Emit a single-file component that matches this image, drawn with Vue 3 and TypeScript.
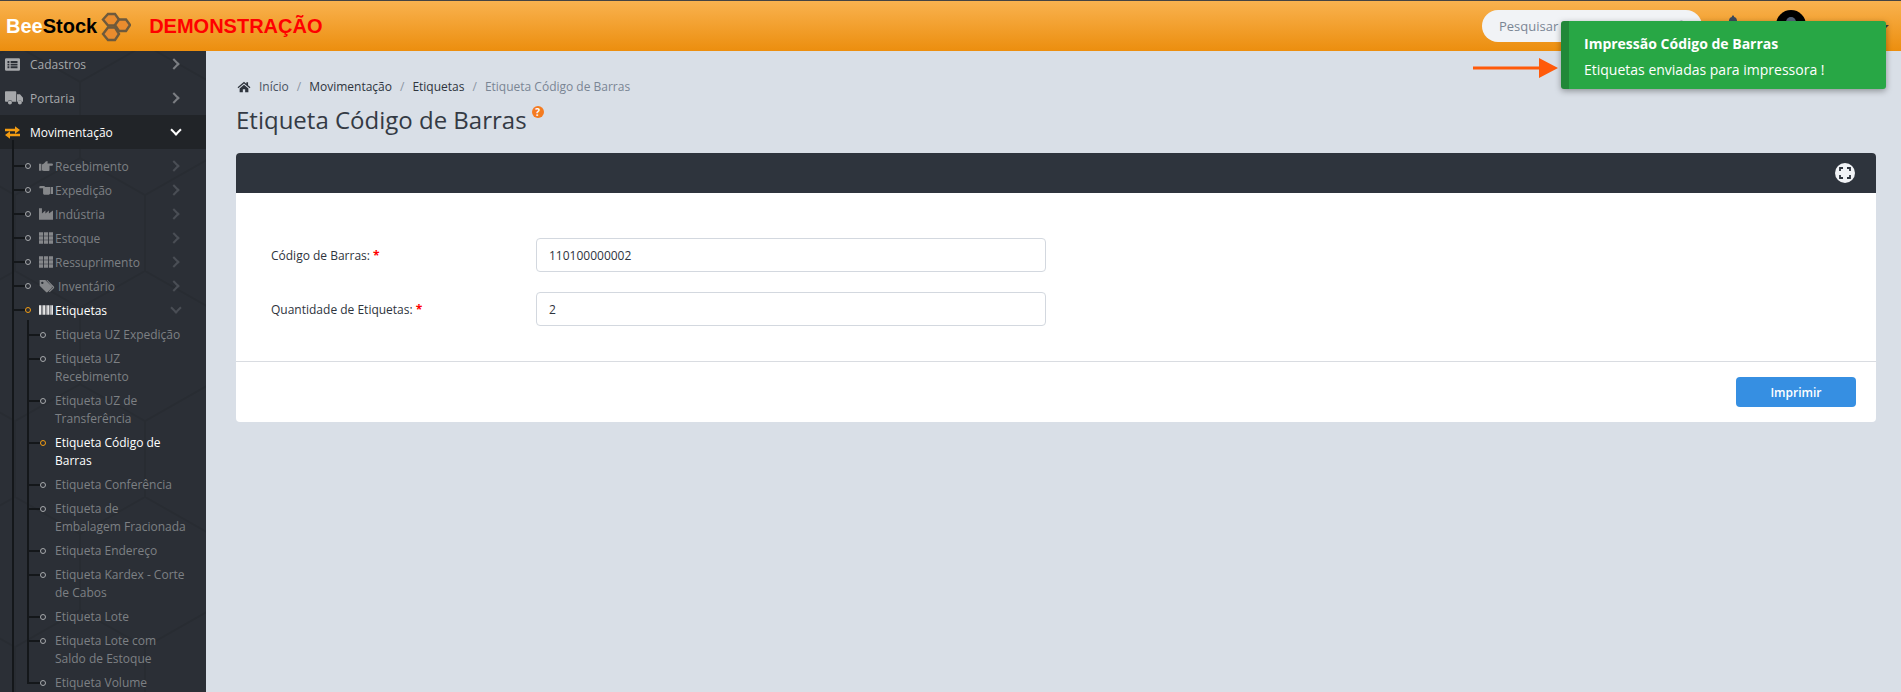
<script setup lang="ts">
type IconName = 'list' | 'truck' | 'exchange' | 'handRight' | 'handLeft' | 'industry' | 'grid' | 'tags' | 'barcode'

const icons: Record<IconName, string> = {
  list: 'M2 2h20a2 2 0 0 1 2 2v16a2 2 0 0 1-2 2H2a2 2 0 0 1-2-2V4a2 2 0 0 1 2-2zM4 6.500v3h3v-3zM9 6.500v3h11v-3zM4 10.700v3h3v-3zM9 10.700v3h11v-3zM4 14.900v3h3v-3zM9 14.900v3h11v-3z',
  truck: 'M1 3h13a1 1 0 0 1 1 1v13H9.600a3 3 0 0 0-5.900 0H1a1 1 0 0 1-1-1V4a1 1 0 0 1 1-1zM16 7h4l4 4.500V17h-1.300a3 3 0 0 0-5.700 0h-1zM6.600 15.200a2.700 2.700 0 1 1 0 5.400 2.700 2.700 0 0 1 0-5.400zM19.800 15.200a2.700 2.700 0 1 1 0 5.400 2.700 2.700 0 0 1 0-5.400z',
  exchange: 'M0 6h16V2l8 6-8 6v-4H0zM24 14H8v-4L0 16l8 6v-4h16z',
  handRight: 'M0 8h4v12H0zM5 9.500c3-.8 5-2.700 7-5.500h3l-.5 3.500H22a2 2 0 0 1 0 4h-4V19a1.500 1.500 0 0 1-1.500 1.500H9c-1.500 0-2.500-1-4-1z',
  handLeft: 'M24 7h-4v12h4zM19 7H10.500L9 5H2.500a2 2 0 0 0 0 4.200H7V18a2 2 0 0 0 2 2h8c1 0 1.500-.8 2-1.500z',
  industry: 'M0 2h5v9l6-5v5l6-5v5l7-5v16H0z',
  grid: 'M0 2h7v6H0zM8.500 2h7v6h-7zM17 2h7v6h-7zM0 9h7v6H0zM8.500 9h7v6h-7zM17 9h7v6h-7zM0 16h7v6H0zM8.500 16h7v6h-7zM17 16h7v6h-7z',
  tags: 'M1 3h8.500L19 12.500a1.800 1.800 0 0 1 0 2.500l-6 6a1.800 1.800 0 0 1-2.500 0L1 11.500zM5 5.500a1.800 1.800 0 1 0 0 3.600 1.800 1.800 0 0 0 0-3.600zM12.500 3l9.800 9.800a1.800 1.800 0 0 1 0 2.500l-6.300 6.200-1.200-1.200 6-6L11 3z',
  barcode: 'M0 4h3.500v16H0zM4.500 4h1.500v16H4.500zM7 4h3.500v16H7zM11.500 4h1.500v16h-1.500zM14 4h3.500v16H14zM18.500 4h1.500v16h-1.500zM21 4h3v16h-3z',
}

interface SubItem {
  label: string
  icon: IconName
  wide?: boolean
  open?: boolean
}

const topBefore: { label: string; icon: IconName; big?: boolean }[] = [
  { label: 'Cadastros', icon: 'list' },
  { label: 'Portaria', icon: 'truck', big: true },
]

const subItems: SubItem[] = [
  { label: 'Recebimento', icon: 'handRight' },
  { label: 'Expedição', icon: 'handLeft' },
  { label: 'Indústria', icon: 'industry' },
  { label: 'Estoque', icon: 'grid' },
  { label: 'Ressuprimento', icon: 'grid' },
  { label: 'Inventário', icon: 'tags', wide: true },
]

const labels = [
  'Etiqueta UZ Expedição',
  'Etiqueta UZ Recebimento',
  'Etiqueta UZ de Transferência',
  'Etiqueta Código de Barras',
  'Etiqueta Conferência',
  'Etiqueta de Embalagem Fracionada',
  'Etiqueta Endereço',
  'Etiqueta Kardex - Corte de Cabos',
  'Etiqueta Lote',
  'Etiqueta Lote com Saldo de Estoque',
  'Etiqueta Volume',
]
</script>

<template>
  <div class="page">
    <header class="topbar">
      <div class="brand">
        <span class="brand-name"><span class="bee">Bee</span>Stock</span>
        <svg class="brand-mark" viewBox="0 0 32 32" aria-hidden="true">
          <g stroke="#6e5a3c" stroke-width="2.400" fill="#e98c2e">
            <path d="M4 9.500 9 4h7l4 5.500-4 6H9z" />
            <path d="M16 15 20 9.500h7l4 5.500-4 6h-7z" />
            <path d="M4 24l5-6.500h7l4 6.500-4 6H9z" />
          </g>
        </svg>
        <span class="demo">DEMONSTRAÇÃO</span>
      </div>
      <div class="topbar-right">
        <div class="search">
          <span>Pesquisar no menu</span>
          <svg class="search-icon" viewBox="0 0 24 24" aria-hidden="true">
            <circle cx="10" cy="10" r="7" fill="none" stroke="#3c4a5c" stroke-width="3.500" />
            <path d="M15 15l7 7" stroke="#3c4a5c" stroke-width="3.500" />
          </svg>
        </div>
        <svg class="bell" viewBox="0 0 24 24" aria-hidden="true">
          <path d="M12 1a2 2 0 0 1 2 2.300c3.500 1 5 3.700 5 7.700 0 3 1 5 3 6.500V19H2v-1.500c2-1.500 3-3.500 3-6.500 0-4 1.500-6.700 5-7.700A2 2 0 0 1 12 1z" fill="#3c4a5c" />
        </svg>
        <div class="avatar"><span class="avatar-face"></span></div>
        <span class="caret"></span>
      </div>
    </header>

    <div class="workspace">
      <aside class="sidebar">
        <svg class="hex-bg" aria-hidden="true">
          <defs>
            <pattern id="hexes" width="130" height="226" patternUnits="userSpaceOnUse" patternTransform="translate(-50 220)">
              <path d="M65 0 130 37v76L65 150 0 113V37zM65 150v76" fill="none" stroke="#000" stroke-opacity="0.07" stroke-width="2" />
            </pattern>
          </defs>
          <rect width="100%" height="100%" fill="url(#hexes)" />
        </svg>
        <nav class="nav">
          <a v-for="item in topBefore" :key="item.label" class="top-row">
            <span class="top-slot">
              <svg class="top-icon" :class="{ big: item.big }" viewBox="0 0 24 24" aria-hidden="true"><path :d="icons[item.icon]" fill-rule="evenodd" /></svg>
            </span>
            <span class="top-label">{{ item.label }}</span>
            <span class="chev"></span>
          </a>
          <a class="top-row active">
            <span class="top-slot">
              <svg class="top-icon" viewBox="0 0 24 24" aria-hidden="true"><path :d="icons.exchange" /></svg>
            </span>
            <span class="top-label">Movimentação</span>
            <span class="chev down"></span>
          </a>
          <ul class="sub-list">
            <li v-for="item in subItems" :key="item.label" class="sub-row">
              <svg class="sub-icon" :class="{ wide: item.wide }" viewBox="0 0 24 24" aria-hidden="true"><path :d="icons[item.icon]" fill-rule="evenodd" /></svg>
              <span class="sub-label">{{ item.label }}</span>
              <span class="chev dim"></span>
            </li>
            <li class="sub-row open">
              <svg class="sub-icon" viewBox="0 0 24 24" aria-hidden="true"><path :d="icons.barcode" /></svg>
              <span class="sub-label">Etiquetas</span>
              <span class="chev dim down"></span>
            </li>
            <li class="child-wrap">
              <ul class="child-list">
                <li
                  v-for="label in labels"
                  :key="label"
                  class="child-row"
                  :class="{ current: label === 'Etiqueta Código de Barras' }"
                >{{ label }}</li>
              </ul>
            </li>
          </ul>
        </nav>
      </aside>

      <main class="content">
        <div class="crumbs">
          <svg class="home" viewBox="0 0 24 24" aria-hidden="true">
            <path d="M12 3 1 12.500l1.300 1.500L12 5.800 21.700 14l1.300-1.500L19 9V4h-3v2.400zM4.500 14.500V21H10v-5h4v5h5.500v-6.500L12 8.200z" />
          </svg>
          <span class="muted">Início</span>
          <span class="sep">/</span>
          <span>Movimentação</span>
          <span class="sep">/</span>
          <span>Etiquetas</span>
          <span class="sep">/</span>
          <span class="last">Etiqueta Código de Barras</span>
        </div>
        <h1 class="title">Etiqueta Código de Barras<span class="help">?</span></h1>

        <section class="panel">
          <div class="panel-head">
            <span class="expand">
              <svg viewBox="0 0 20 20" aria-hidden="true">
                <path d="M5 8V5h3M12 5h3v3M15 12v3h-3M8 15H5v-3" fill="none" stroke="#2e343d" stroke-width="1.800" />
              </svg>
            </span>
          </div>
          <form class="panel-body">
            <label class="field">
              <span class="field-label">Código de Barras: <b class="req">*</b></span>
              <input class="field-input" type="text" value="110100000002" />
            </label>
            <label class="field">
              <span class="field-label">Quantidade de Etiquetas: <b class="req">*</b></span>
              <input class="field-input" type="text" value="2" />
            </label>
          </form>
          <div class="panel-foot">
            <button class="print" type="button">Imprimir</button>
          </div>
        </section>
      </main>
    </div>

    <svg class="pointer" viewBox="0 0 88 22" aria-hidden="true">
      <path d="M1 9.500h66V1l19 10-19 10v-8.500H1z" fill="#ff5a0a" />
    </svg>
    <div class="toast">
      <div class="toast-title">Impressão Código de Barras</div>
      <div class="toast-text">Etiquetas enviadas para impressora !</div>
    </div>
  </div>
</template>

<style>
html, body { margin: 0; background: #d9dfe7; }
</style>

<style scoped>
.page {
  position: relative;
  width: 1901px;
  height: 692px;
  overflow: hidden;
  display: flex;
  flex-direction: column;
  background: #d9dfe7;
  font-family: "Open Sans", "Liberation Sans", sans-serif;
  font-size: 12px;
  color: #2e343d;
}

/* top bar */
.topbar {
  position: relative;
  z-index: 2;
  flex: 0 0 51px;
  box-sizing: border-box;
  border-top: 1px solid #444;
  display: flex;
  justify-content: space-between;
  align-items: center;
  background: linear-gradient(#f9b24f, #ec8e0e);
}
.brand { display: flex; align-items: center; padding-left: 6px; }
.brand-name {
  font-family: "Liberation Sans", Arial, sans-serif;
  font-weight: 700;
  font-size: 20px;
  color: #000;
}
.bee { color: #fff; }
.brand-mark { width: 32px; height: 32px; margin-left: 2px; }
.demo {
  margin-left: 18px;
  font-family: "Liberation Sans", Arial, sans-serif;
  font-weight: 700;
  font-size: 20px;
  color: #f00;
}
.topbar-right { display: flex; align-items: center; }
.search {
  box-sizing: border-box;
  width: 220px;
  height: 32px;
  margin-right: 24px;
  padding: 0 13px 0 17px;
  display: flex;
  align-items: center;
  justify-content: space-between;
  border-radius: 16px;
  background: #f1f3f6;
  font-size: 13px;
  color: #7a8594;
}
.search-icon { width: 13px; height: 13px; }
.bell { width: 14px; height: 14px; margin-right: 36px; margin-top: -8px; }
.avatar {
  width: 30px;
  height: 30px;
  border-radius: 50%;
  background: #000;
  display: flex;
  justify-content: center;
  padding-top: 7px;
  box-sizing: border-box;
  margin-top: -2px;
}
.avatar-face { width: 10px; height: 10px; border-radius: 50%; background: #55657a; }
.caret {
  margin-left: 73px;
  margin-right: 12px;
  margin-top: 3px;
  border: 5px solid transparent;
  border-top-color: #3c3c3c;
  border-bottom: 0;
}

/* sidebar */
.workspace { flex: 1; display: flex; min-height: 0; }
.sidebar {
  position: relative;
  flex: 0 0 206px;
  overflow: hidden;
  background: #2b2f36;
}
.hex-bg { position: absolute; inset: 0; width: 100%; height: 100%; }
.nav { position: relative; margin-top: -4px; }
.top-row {
  height: 34px;
  display: flex;
  align-items: center;
  padding-left: 5px;
  color: #a6a8ab;
  font-size: 12px;
}
.top-row.active { background: #212428; color: #fff; }
.top-slot { width: 25px; flex: none; display: flex; align-items: center; }
.top-icon { width: 15px; height: 15px; fill: #a6a8ab; flex: none; }
.top-icon.big { width: 18px; height: 18px; }
.active .top-icon { fill: #f39c12; }
.top-label { flex: 1; }
.chev {
  width: 6px;
  height: 6px;
  margin-right: 28px;
  border-top: 2px solid #7b7e83;
  border-right: 2px solid #7b7e83;
  transform: rotate(45deg);
  flex: none;
}
.chev.down { transform: translate(2px, -2px) rotate(135deg); border-color: #fff; }
.chev.dim { border-color: #4a4e55; }
.chev.dim.down { border-color: #4a4e55; }
.sub-list {
  position: relative;
  list-style: none;
  margin: 0;
  padding: 5px 0 0;
}
.sub-list::before {
  content: "";
  position: absolute;
  left: 12px;
  top: -9px;
  bottom: 0;
  width: 2px;
  background: #14171a;
}
.sub-row {
  position: relative;
  height: 24px;
  display: flex;
  align-items: center;
  padding-left: 39px;
  color: #7d8084;
}
.sub-row::before,
.child-row::before {
  content: "";
  position: absolute;
  top: 11px;
  height: 2px;
  background: #14171a;
}
.sub-row::before { left: 14px; width: 11px; }
.sub-row::after,
.child-row::after {
  content: "";
  position: absolute;
  top: 9px;
  width: 6px;
  height: 6px;
  box-sizing: border-box;
  border: 1.500px solid #a6a8ab;
  border-radius: 50%;
}
.sub-row::after { left: 25px; }
.sub-row.open { color: #fff; }
.sub-row.open::after { border-color: #f39c12; }
.sub-icon { width: 14px; height: 14px; fill: #85878a; flex: none; margin-right: 2px; }
.sub-icon.wide { width: 16px; height: 16px; margin-right: 3px; }
.open .sub-icon { fill: #e6e6e6; }
.sub-label { flex: 1; }
.child-wrap { display: block; }
.child-list {
  position: relative;
  list-style: none;
  margin: 0;
  padding: 1px 0 0;
}
.child-list::before {
  content: "";
  position: absolute;
  left: 27px;
  top: -2px;
  bottom: 11px;
  width: 2px;
  background: #14171a;
}
.child-row {
  position: relative;
  box-sizing: border-box;
  padding: 3px 19px 3px 55px;
  line-height: 18px;
  color: #7d8084;
}
.child-row::before { left: 29px; width: 11px; }
.child-row::after { left: 40px; }
.child-row.current { color: #fff; }
.child-row.current::after { border-color: #f39c12; }

/* content */
.content { flex: 1; min-width: 0; padding: 27px 25px 0 30px; }
.crumbs {
  display: flex;
  align-items: center;
  height: 18px;
  line-height: 18px;
  color: #2e343d;
}
.home { width: 14px; height: 14px; margin-left: 1px; margin-right: 8px; fill: #2e343d; }
.muted { color: #4a5361; }
.sep { margin: 0 8px; color: #8b95a3; }
.last { color: #7a8594; }
.title {
  position: relative;
  margin: 7px 0 16px;
  height: 34px;
  line-height: 34px;
  font-size: 24px;
  font-weight: 400;
  color: #343a44;
}
.help {
  display: inline-block;
  vertical-align: top;
  width: 12px;
  height: 12px;
  margin: 3px 0 0 5px;
  border-radius: 50%;
  background: #f47b20;
  color: #fff;
  font-size: 10px;
  font-weight: 700;
  line-height: 12px;
  text-align: center;
}
.panel { background: #fff; border-radius: 4px; }
.panel-head {
  height: 40px;
  padding-right: 21px;
  display: flex;
  align-items: center;
  justify-content: flex-end;
  border-radius: 4px 4px 0 0;
  background: #2e343d;
}
.expand {
  width: 20px;
  height: 20px;
  border-radius: 50%;
  background: #f1f3f6;
  display: block;
}
.expand svg { display: block; width: 20px; height: 20px; }
.panel-body {
  padding: 45px 35px 35px;
  display: flex;
  flex-direction: column;
  gap: 20px;
}
.field { display: flex; align-items: center; }
.field-label { width: 265px; flex: none; color: #2e343d; }
.req { color: #f00; font-weight: 700; }
.field-input {
  box-sizing: border-box;
  width: 510px;
  height: 34px;
  padding: 0 12px;
  border: 1px solid #d3d8df;
  border-radius: 4px;
  background: #fff;
  font: inherit;
  color: #2e343d;
  outline: none;
}
.panel-foot {
  border-top: 1px solid #d9dce1;
  padding: 15px 20px;
  display: flex;
  justify-content: flex-end;
}
.print {
  width: 120px;
  height: 30px;
  border: 0;
  border-radius: 4px;
  background: #368fe2;
  color: #fff;
  font: 600 12px "Open Sans", sans-serif;
}

/* overlays */
.toast {
  position: absolute;
  z-index: 3;
  left: 1561px;
  top: 21px;
  box-sizing: border-box;
  width: 325px;
  height: 68px;
  padding: 13px 15px 0 15px;
  border-left: 8px solid #218838;
  border-radius: 3px;
  background: #28a745;
  box-shadow: 0 2px 6px rgba(0, 0, 0, 0.35);
  color: #fff;
}
.toast-title { font-size: 14px; font-weight: 700; line-height: 19px; }
.toast-text { margin-top: 7px; font-size: 14px; line-height: 19px; }
.pointer {
  position: absolute;
  z-index: 3;
  left: 1472px;
  top: 57px;
  width: 88px;
  height: 22px;
}
</style>
